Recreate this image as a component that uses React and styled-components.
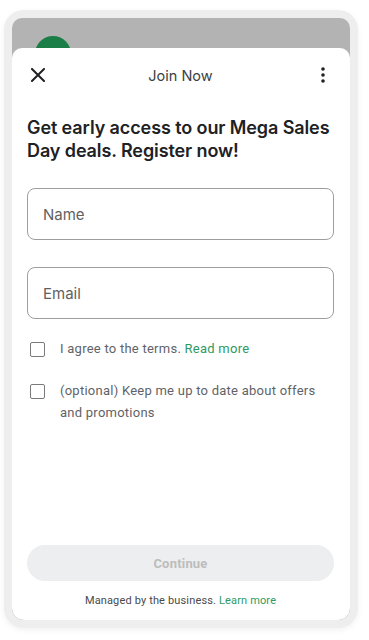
import React from 'react'
import styled, { createGlobalStyle } from 'styled-components'

const Global = createGlobalStyle`
  html, body { margin: 0; padding: 0; background: #ffffff; }
  body { font-family: Roboto, "Noto Sans", sans-serif; }
  * { box-sizing: border-box; }
`

const Page = styled.div`
  width: 369px;
  height: 640px;
  padding: 10px 11px 12px 4px;
`

const Frame = styled.div`
  height: 618px;
  border-radius: 20px;
  background: #eeeeee;
  padding: 8px;
  box-shadow: 0 2px 6px rgba(0, 0, 0, 0.06);
  display: flex;
`

const Screen = styled.div`
  flex: 1;
  display: flex;
  flex-direction: column;
  background: #b3b3b3;
  border-radius: 10px 10px 12px 12px;
  overflow: hidden;
`

const Backdrop = styled.div`
  height: 30px;
  flex-shrink: 0;
  overflow: hidden;
  padding: 18px 0 0 23px;
`

const Avatar = styled.div`
  width: 36px;
  height: 36px;
  border-radius: 50%;
  background: #1b7e47;
`

const Sheet = styled.div`
  flex: 1;
  display: flex;
  flex-direction: column;
  background: #ffffff;
  border-radius: 10px 10px 12px 12px;
  padding: 0 16px 11px 15px;
`

const TopBar = styled.div`
  height: 54px;
  display: flex;
  align-items: center;
  justify-content: space-between;
  margin: 0 -4px;
`

const IconButton = styled.button`
  width: 30px;
  height: 30px;
  display: flex;
  align-items: center;
  justify-content: center;
  border: none;
  background: none;
  padding: 0;
  color: #202124;
`

const Title = styled.div`
  font-family: Inter, Roboto, sans-serif;
  font-size: 14.5px;
  color: #3c4043;
`

const Heading = styled.h1`
  margin: 14px 0 0;
  font-family: Inter, Roboto, sans-serif;
  font-size: 18px;
  font-weight: 600;
  line-height: 23px;
  color: #202124;
  letter-spacing: -0.1px;
`

const Field = styled.div`
  height: 52px;
  margin-top: ${p => p.$gap}px;
  border: 1px solid #9e9e9e;
  border-radius: 8px;
  display: flex;
  align-items: center;
  padding: 0 15px;
  font-family: Inter, Roboto, sans-serif;
  font-size: 15px;
  color: #616161;
`

const CheckRow = styled.label`
  display: flex;
  align-items: flex-start;
  gap: 15px;
  margin-top: ${p => p.$gap}px;
  padding-left: 3px;
  font-size: 13px;
  line-height: 22px;
  letter-spacing: 0.25px;
  color: #5f6368;
`

const Box = styled.span`
  flex-shrink: 0;
  width: 15px;
  height: 15px;
  margin-top: 4px;
  border: 1.5px solid #7a7a7a;
  border-radius: 2px;
`

const Link = styled.span`
  color: #2f9a62;
`

const Spacer = styled.div`
  flex: 1;
`

const Continue = styled.button`
  height: 36px;
  border: none;
  border-radius: 18px;
  background: #eceeef;
  color: #bdbdbd;
  font-family: Roboto, sans-serif;
  font-size: 13px;
  font-weight: 700;
  letter-spacing: 0.2px;
`

const Footer = styled.div`
  margin-top: 12px;
  text-align: center;
  font-size: 11px;
  line-height: 16px;
  letter-spacing: 0.15px;
  color: #4a4a4a;
`

export default function App() {
  return (
    <Page>
      <Global />
      <Frame>
        <Screen>
          <Backdrop>
            <Avatar />
          </Backdrop>
          <Sheet>
            <TopBar>
              <IconButton aria-label="Close">
                <svg width="14" height="14" viewBox="0 0 14 14">
                  <path d="M1 1L13 13M13 1L1 13" stroke="currentColor" strokeWidth="2" strokeLinecap="square" />
                </svg>
              </IconButton>
              <Title>Join Now</Title>
              <IconButton aria-label="More">
                <svg width="4" height="16" viewBox="0 0 4 16">
                  <circle cx="2" cy="2" r="1.8" fill="currentColor" />
                  <circle cx="2" cy="8" r="1.8" fill="currentColor" />
                  <circle cx="2" cy="14" r="1.8" fill="currentColor" />
                </svg>
              </IconButton>
            </TopBar>
            <Heading>Get early access to our Mega Sales Day deals. Register now!</Heading>
            <Field $gap={26}>Name</Field>
            <Field $gap={27}>Email</Field>
            <CheckRow $gap={19}>
              <Box />
              <span>I agree to the terms. <Link>Read more</Link></span>
            </CheckRow>
            <CheckRow $gap={20}>
              <Box />
              <span>(optional) Keep me up to date about offers and promotions</span>
            </CheckRow>
            <Spacer />
            <Continue>Continue</Continue>
            <Footer>
              Managed by the business. <Link>Learn more</Link>
            </Footer>
          </Sheet>
        </Screen>
      </Frame>
    </Page>
  )
}
